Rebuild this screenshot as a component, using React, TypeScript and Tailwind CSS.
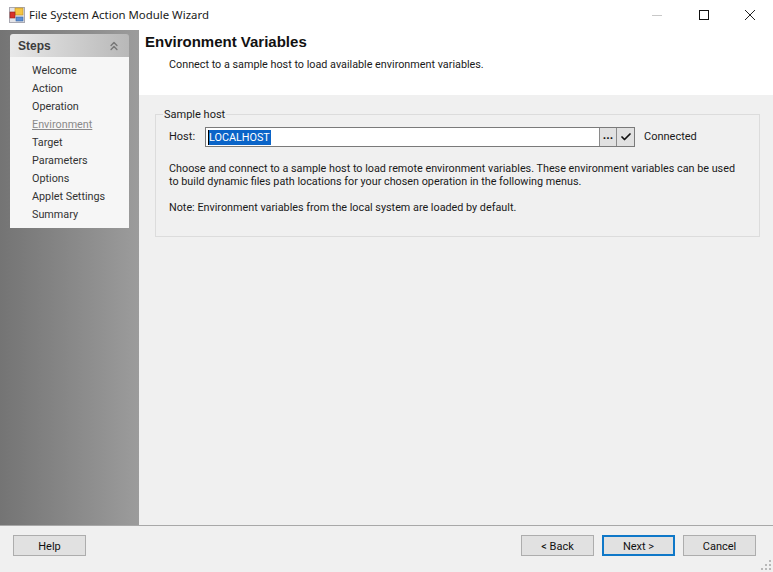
import { Check, ChevronsUp } from "lucide-react";

const STEPS = ["Welcome", "Action", "Operation", "Environment", "Target", "Parameters", "Options", "Applet Settings", "Summary"];

function AppIcon() {
  return (
    <svg width="16" height="16" viewBox="0 0 16 16" className="shrink-0">
      <rect x="0.5" y="0.5" width="15" height="15" fill="#e4e4e8" stroke="#a9a9b2" />
      <rect x="6" y="1" width="8" height="7" fill="#f5c542" stroke="#b98d1e" strokeWidth="0.6" />
      <rect x="1" y="5" width="5" height="6" fill="#d8322a" stroke="#8c2019" strokeWidth="0.6" />
      <rect x="7" y="10" width="7" height="4" fill="#5b8fd6" stroke="#3a659e" strokeWidth="0.6" />
    </svg>
  );
}

function TitleBar() {
  return (
    <div className="flex h-[30px] shrink-0 items-center bg-white pl-[9px]">
      <AppIcon />
      <span className="ml-1 font-['Noto_Sans',sans-serif] text-[11.4px] text-[#1a1a1a]">File System Action Module Wizard</span>
      <div className="ml-auto flex items-center">
        <svg width="12" height="12" viewBox="0 0 12 12" className="mr-[35px]">
          <path d="M1 6.5h10" stroke="#c8c8c8" strokeWidth="1" />
        </svg>
        <svg width="12" height="12" viewBox="0 0 12 12" className="mr-[34px]">
          <rect x="1.5" y="1.5" width="9" height="9" fill="none" stroke="#111" strokeWidth="1" />
        </svg>
        <svg width="12" height="12" viewBox="0 0 12 12" className="mr-[17px]">
          <path d="M1 1l10 10M11 1L1 11" stroke="#222" strokeWidth="1" fill="none" />
        </svg>
      </div>
    </div>
  );
}

function Sidebar() {
  return (
    <div className="w-[139px] shrink-0 bg-gradient-to-r from-[#747474] to-[#9c9c9c] pl-[10px] pr-[10px] pt-1">
      <div className="flex h-[23px] items-center justify-between rounded-t-[3px] bg-gradient-to-r from-[#e8e8e8] to-[#b8b8b8] pl-2 pr-2">
        <span className="font-['Liberation_Sans',sans-serif] text-[12px] font-bold text-[#3c3c3c]">Steps</span>
        <ChevronsUp size={14} strokeWidth={2.5} className="text-[#777]" />
      </div>
      <div className="flex flex-col bg-[#f6f6f6] pb-1 pl-[22px] pt-[5px]">
        {STEPS.map((step) => (
          <span
            key={step}
            className={`h-[18px] text-[10.8px] leading-[18px] ${
              step === "Environment" ? "text-[#8a8a8a] underline" : "text-[#333]"
            }`}
          >
            {step}
          </span>
        ))}
      </div>
    </div>
  );
}

function HostRow() {
  return (
    <div className="flex h-[20px] items-center">
      <span className="w-[36px] pt-px text-[11px]">Host:</span>
      <div className="flex h-[20px] w-[430px] border border-[#7a7a7a] bg-white">
        <div className="flex min-w-0 flex-1 items-center pl-[2px]">
          <span className="border-l border-black bg-[#0a64c8] pr-px pt-px text-[10.8px] leading-[14px] text-white">LOCALHOST</span>
        </div>
        <button className="flex w-[17px] items-center justify-center border-l border-[#8a8a8a] bg-[#e1e1e1] text-[12px] font-bold leading-none text-[#111]">
          <span className="mb-[5px]">...</span>
        </button>
        <button className="flex w-[18px] items-center justify-center border-l border-[#8a8a8a] bg-[#e1e1e1]">
          <Check size={12} strokeWidth={3.5} className="text-[#111]" />
        </button>
      </div>
      <span className="ml-[9px] pt-px text-[11px]">Connected</span>
    </div>
  );
}

function WizardButton({ label, primary = false }: { label: string; primary?: boolean }) {
  return (
    <button
      className={`h-[21px] w-[73px] bg-[#e1e1e1] pt-px text-[11px] leading-none text-[#111] ${
        primary ? "border-2 border-[#0f78c8]" : "border border-[#adadad]"
      }`}
    >
      {label}
    </button>
  );
}

export default function App() {
  return (
    <div className="flex h-[572px] w-[773px] flex-col overflow-hidden bg-[#f0f0f0] font-['Roboto',sans-serif] text-[#1a1a1a]">
      <TitleBar />
      <div className="flex h-[495px] shrink-0">
        <Sidebar />
        <div className="flex min-w-0 flex-1 flex-col">
          <div className="h-[65px] shrink-0 bg-white pl-[6px] pt-[3px]">
            <div className="font-['Liberation_Sans',sans-serif] text-[15px] font-bold leading-[18px] text-[#111]">Environment Variables</div>
            <div className="mt-[6px] pl-6 text-[10.8px] leading-[16px]">
              Connect to a sample host to load available environment variables.
            </div>
          </div>
          <div className="relative ml-4 mr-[13px] mt-[19px] h-[123px] border border-[#dcdcdc] px-[13px] pt-3">
            <span className="absolute left-[7px] top-[-8px] bg-[#f0f0f0] px-px text-[11px] leading-[16px]">Sample host</span>
            <HostRow />
            <p className="mt-[15px] whitespace-nowrap text-[10.8px] leading-[13px]">
              Choose and connect to a sample host to load remote environment variables. These environment variables can be used
              <br />
              to build dynamic files path locations for your chosen operation in the following menus.
            </p>
            <p className="mt-[13px] whitespace-nowrap text-[10.8px] leading-[13px]">
              Note: Environment variables from the local system are loaded by default.
            </p>
          </div>
        </div>
      </div>
      <div className="relative flex flex-1 items-start border-t border-[#a8a8a8] pl-[13px] pr-[17px] pt-[9px]">
        <WizardButton label="Help" />
        <div className="ml-auto flex gap-2">
          <WizardButton label="< Back" />
          <WizardButton label="Next >" primary />
          <WizardButton label="Cancel" />
        </div>
        <svg width="11" height="11" viewBox="0 0 11 11" className="absolute bottom-px right-px">
          <g fill="#b8b8b8">
            <rect x="8" y="0" width="2" height="2" />
            <rect x="4" y="4" width="2" height="2" />
            <rect x="8" y="4" width="2" height="2" />
            <rect x="0" y="8" width="2" height="2" />
            <rect x="4" y="8" width="2" height="2" />
            <rect x="8" y="8" width="2" height="2" />
          </g>
        </svg>
      </div>
    </div>
  );
}
